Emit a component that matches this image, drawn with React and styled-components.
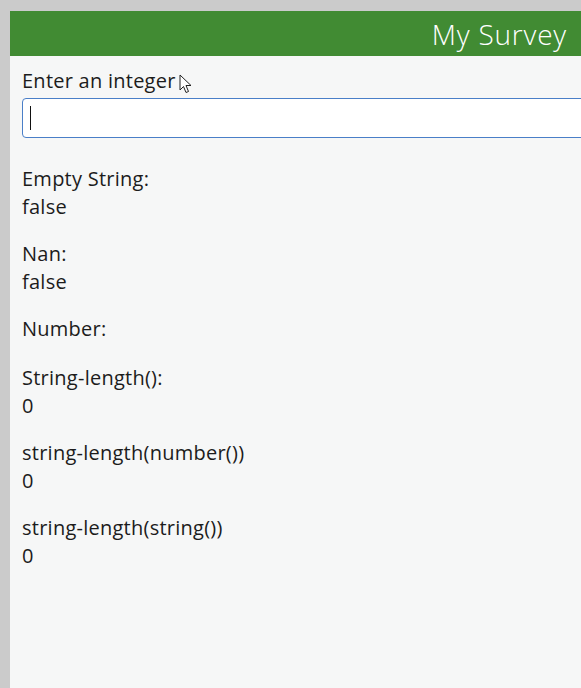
import React from "react";
import styled, { createGlobalStyle } from "styled-components";

const Global = createGlobalStyle`
  html, body {
    margin: 0;
    padding: 0;
    background: #cbcbcb;
  }
  body {
    font-family: "Open Sans", "Noto Sans", sans-serif;
    color: #1c1c1c;
  }
`;

const Frame = styled.div`
  padding: 11px 0 0 10px;
  height: 688px;
  box-sizing: border-box;
  overflow: hidden;
`;

const Page = styled.div`
  background: #f6f7f7;
  height: 100%;
  display: flex;
  flex-direction: column;
`;

const Header = styled.header`
  background: #418b33;
  height: 45px;
  display: flex;
  align-items: center;
  justify-content: flex-end;
  padding-right: 14px;
`;

const Title = styled.h1`
  margin: 0;
  color: #fff;
  font-size: 28px;
  font-weight: 300;
  letter-spacing: 0.8px;
`;

const Body = styled.main`
  padding: 11px 0 0 12px;
`;

const Question = styled.div`
  position: relative;
  margin-bottom: 26px;
`;

const QuestionLabel = styled.label`
  display: block;
  font-size: 20px;
  letter-spacing: 0.25px;
  line-height: 28px;
  margin-bottom: 3px;
`;

const Input = styled.div`
  position: relative;
  height: 38px;
  margin-right: -20px;
  background: #fff;
  border: 1px solid #4a7fc8;
  border-radius: 4px;
`;

const Caret = styled.span`
  position: absolute;
  left: 7px;
  top: 7px;
  width: 1px;
  height: 24px;
  background: #111;
`;

const Pointer = styled.svg`
  position: absolute;
  left: 157px;
  top: 7px;
`;

const Note = styled.div`
  margin-bottom: 19px;
`;

const NoteLabel = styled.div`
  font-size: 20px;
  letter-spacing: 0.25px;
  line-height: 30px;
`;

const NoteValue = styled.div`
  font-size: 20px;
  letter-spacing: 0.25px;
  line-height: 26px;
`;

const notes = [
  { label: "Empty String:", value: "false" },
  { label: "Nan:", value: "false" },
  { label: "Number:", value: "" },
  { label: "String-length():", value: "0" },
  { label: "string-length(number())", value: "0" },
  { label: "string-length(string())", value: "0" },
];

export default function App() {
  return (
    <>
      <Global />
      <Frame>
        <Page>
          <Header>
            <Title>My Survey</Title>
          </Header>
          <Body>
            <Question>
              <QuestionLabel>Enter an integer</QuestionLabel>
              <Pointer width="14" height="20" viewBox="0 0 14 20">
                <path
                  d="M1 1 L1 16 L4.5 12.5 L7 18.5 L9.5 17.5 L7 11.5 L12 11.5 Z"
                  fill="#fff"
                  stroke="#222"
                  strokeWidth="1"
                  strokeLinejoin="round"
                />
              </Pointer>
              <Input>
                <Caret />
              </Input>
            </Question>
            {notes.map((n) => (
              <Note key={n.label}>
                <NoteLabel>{n.label}</NoteLabel>
                {n.value && <NoteValue>{n.value}</NoteValue>}
              </Note>
            ))}
          </Body>
        </Page>
      </Frame>
    </>
  );
}
